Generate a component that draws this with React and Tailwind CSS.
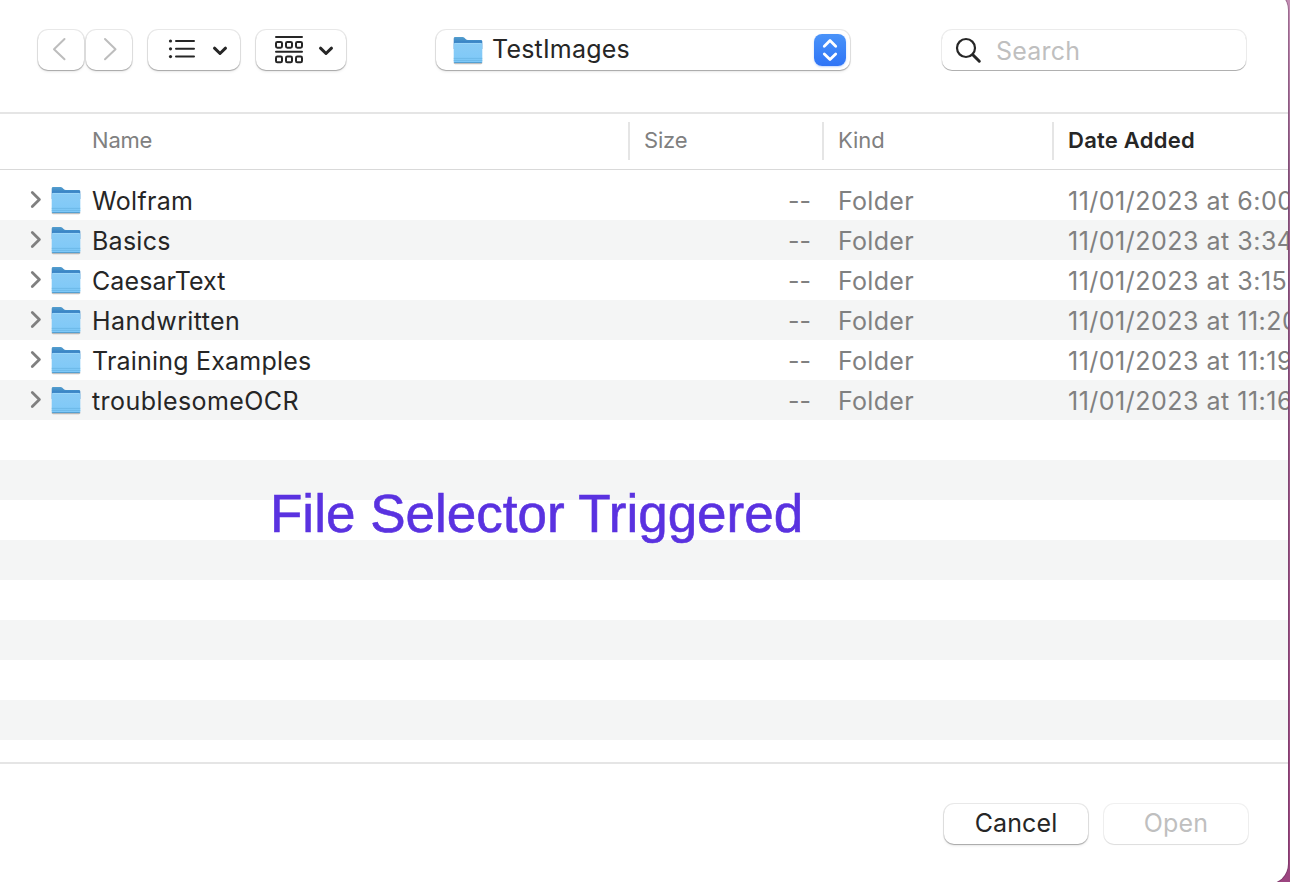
import React from "react";

const rows = [
  { name: "Wolfram", tracking: "tracking-[0.33px]", date: "11/01/2023 at 6:00 PM" },
  { name: "Basics", tracking: "tracking-[0.25px]", date: "11/01/2023 at 3:34 PM" },
  { name: "CaesarText", tracking: "tracking-[0.1px]", date: "11/01/2023 at 3:15 PM" },
  { name: "Handwritten", tracking: "tracking-[0.4px]", date: "11/01/2023 at 11:20 AM" },
  { name: "Training Examples", tracking: "tracking-[0.2px]", date: "11/01/2023 at 11:19 AM" },
  { name: "troublesomeOCR", tracking: "tracking-[0.43px]", date: "11/01/2023 at 11:16 AM" },
];
const emptyRows = [0, 1, 2, 3, 4, 5, 6, 7];

const buttonShadow =
  "shadow-[0_0_0_1px_rgba(0,0,0,0.09),0_1px_1px_rgba(0,0,0,0.22),0_2px_3px_rgba(0,0,0,0.08)]";

function Folder() {
  return (
    <svg width="32" height="30" viewBox="0 0 32 30" className="shrink-0">
      <defs>
        <linearGradient id="folderFront" x1="0" y1="0" x2="0" y2="1">
          <stop offset="0" stopColor="#8accf6" />
          <stop offset="1" stopColor="#7dc8f8" />
        </linearGradient>
        <linearGradient id="folderBack" x1="0" y1="0" x2="0" y2="1">
          <stop offset="0" stopColor="#559fce" />
          <stop offset="0.5" stopColor="#347fc4" />
          <stop offset="1" stopColor="#347fc4" />
        </linearGradient>
      </defs>
      <rect x="1.6" y="26.4" width="28.8" height="2.8" rx="1.4" fill="#000" opacity="0.25" />
      <path d="M1.7 3.4Q1.7 2 3.1 2H10.6Q11.6 2 12.4 2.8L13.6 4Q14.6 5 15.8 5H28.9Q30.3 5 30.3 6.4V14H1.7Z" fill="url(#folderBack)" />
      <path d="M1.7 9.4Q1.7 8 3.1 8H28.9Q30.3 8 30.3 9.4V26.4Q30.3 28 28.9 28H3.1Q1.7 28 1.7 26.4Z" fill="url(#folderFront)" />
      <path d="M2.6 8.4H29.4" stroke="#a2daf9" strokeWidth="0.8" />
      <path d="M1.7 23.4H30.3M1.7 25.4H30.3" stroke="#66b3e2" strokeWidth="0.7" />
      <path d="M2.2 27.5H29.8" stroke="#4f9bcd" strokeWidth="0.9" />
    </svg>
  );
}

function ChevronDown() {
  return (
    <svg width="16" height="12" viewBox="0 0 16 12" fill="none" stroke="#262626" strokeWidth="3" strokeLinecap="round" strokeLinejoin="round">
      <path d="M2.5 3.2L8 8.5L13.5 3.2" />
    </svg>
  );
}

function Toolbar() {
  return (
    <div className="flex h-[112px] shrink-0 items-start pl-[38px] pt-[30px]">
      <button className={`flex h-10 w-[46px] items-center justify-center rounded-[10px] bg-white ${buttonShadow}`}>
        <svg width="46" height="40" viewBox="0 0 46 40" fill="none" stroke="#bdbdbd" strokeWidth="2" strokeLinecap="round" strokeLinejoin="round">
          <path d="M26.5 9L16 19.2L26.5 29.3" />
        </svg>
      </button>
      <button className={`ml-[2px] flex h-10 w-[46px] items-center justify-center rounded-[10px] bg-white ${buttonShadow}`}>
        <svg width="46" height="40" viewBox="0 0 46 40" fill="none" stroke="#bdbdbd" strokeWidth="2" strokeLinecap="round" strokeLinejoin="round">
          <path d="M19 9L29.5 19.2L19 29.3" />
        </svg>
      </button>
      <button className={`ml-4 flex h-10 w-[92px] items-center rounded-[10px] bg-white pl-5 ${buttonShadow}`}>
        <svg width="28" height="40" viewBox="0 0 28 40" fill="none" stroke="#262626" strokeWidth="2" strokeLinecap="round">
          <path d="M8 11H26M8 18.8H26M8 26.6H26" />
          <g fill="#262626" stroke="none">
            <circle cx="2.5" cy="11" r="1.6" />
            <circle cx="2.5" cy="18.8" r="1.6" />
            <circle cx="2.5" cy="26.6" r="1.6" />
          </g>
        </svg>
        <span className="ml-4 mt-[1px]"><ChevronDown /></span>
      </button>
      <button className={`ml-4 flex h-10 w-[90px] items-center rounded-[10px] bg-white pl-[18px] ${buttonShadow}`}>
        <svg width="30" height="40" viewBox="0 0 30 40" fill="none" stroke="#262626" strokeWidth="2" strokeLinecap="round">
          <path d="M2 7H28M2 21.7H28" />
          <rect x="2" y="11.9" width="6" height="5.8" rx="1.4" />
          <rect x="12" y="11.9" width="6" height="5.8" rx="1.4" />
          <rect x="22" y="11.9" width="6" height="5.8" rx="1.4" />
          <rect x="2" y="26.5" width="6" height="5.8" rx="1.4" />
          <rect x="12" y="26.5" width="6" height="5.8" rx="1.4" />
          <rect x="22" y="26.5" width="6" height="5.8" rx="1.4" />
        </svg>
        <span className="ml-[14px] mt-[1px]"><ChevronDown /></span>
      </button>
      <button className={`ml-[90px] flex h-10 w-[414px] items-center rounded-[10px] bg-white pl-4 pr-1 ${buttonShadow}`}>
        <span><Folder /></span>
        <span className="-mt-[2px] ml-2 text-[25px] leading-10 tracking-[0.2px] text-[#262626]">TestImages</span>
        <span className="ml-auto flex h-8 w-8 items-center justify-center rounded-[8px] bg-gradient-to-b from-[#4a93f9] to-[#2f74f6] shadow-[0_1px_2px_rgba(47,116,246,0.3)]">
          <svg width="32" height="32" viewBox="0 0 32 32" fill="none" stroke="#fff" strokeWidth="2.8" strokeLinecap="round" strokeLinejoin="round">
            <path d="M10.3 12.2L16 6.6L21.7 12.2M10.3 20L16 25.6L21.7 20" />
          </svg>
        </span>
      </button>
      <label className="ml-[92px] flex h-10 w-[304px] items-center rounded-[10px] bg-white pl-[13px] shadow-[0_0_0_1px_rgba(0,0,0,0.08),0_1px_0.5px_rgba(0,0,0,0.25)]">
        <svg width="28" height="28" viewBox="0 0 28 28" fill="none" stroke="#262626" strokeLinecap="round">
          <circle cx="11" cy="12" r="9" strokeWidth="2.2" />
          <path d="M17.8 18.8L24.3 25.2" strokeWidth="3" />
        </svg>
        <span className="ml-[13px] mt-[2px] text-[25px] leading-10 tracking-[0.2px] text-[#bfbfbf]">Search</span>
      </label>
    </div>
  );
}

export default function App() {
  return (
    <div className="h-[882px] w-[1290px] overflow-hidden bg-gradient-to-b from-[#c48db4] via-[#98608c] via-[20%] to-[#9c4580] font-['Inter','Liberation_Sans',sans-serif]">
      <div className="-mt-[10px] flex h-[894px] w-[1288px] flex-col overflow-hidden whitespace-nowrap rounded-[20px] rounded-l-none bg-white pt-[10px] shadow-[0_0_0_1px_rgba(70,35,65,0.3)]">
        <Toolbar />
        <div className="flex h-[58px] shrink-0 items-start border-b border-t-2 border-b-[#d9d9d9] border-t-[#e5e5e5] text-[22px] leading-[36px] text-[#808080]">
          <div className="mt-2 h-[38px] w-[628px] pl-[92px] tracking-[-0.2px]">Name</div>
          <div className="mt-2 h-[38px] w-[194px] border-l-2 border-[#e5e5e5] pl-[14px] tracking-[-0.2px]">Size</div>
          <div className="mt-2 h-[38px] w-[230px] border-l-2 border-[#e5e5e5] pl-[14px] tracking-[-0.1px]">Kind</div>
          <div className="mt-2 h-[38px] flex-1 border-l-2 border-[#e5e5e5] pl-[14px] font-semibold tracking-[0.25px] text-[#262626]">Date Added</div>
        </div>
        <div className="h-[592px] shrink-0 pt-[10px]">
          {rows.map((row) => (
            <div key={row.name} className="flex h-10 items-center overflow-hidden text-[25px] leading-10 text-[#808080] even:bg-[#f4f5f5]">
              <div className="flex w-[628px] shrink-0 items-center pl-7">
                <svg width="16" height="22" viewBox="0 0 16 22" fill="none" stroke="#808080" strokeWidth="2.8" strokeLinecap="round" strokeLinejoin="round">
                  <path d="M4.3 3.6L11.4 10.5L4.3 17.4" />
                </svg>
                <span className="ml-[6px]"><Folder /></span>
                <span className={`ml-[10px] mt-[2px] text-[#262626] ${row.tracking}`}>{row.name}</span>
              </div>
              <div className="mt-[2px] w-[183px] shrink-0 text-right">--</div>
              <div className="mt-[2px] w-[257px] shrink-0 pl-[27px] tracking-[0.3px]">Folder</div>
              <div className="mt-[2px] flex-1 tracking-[0.5px]">{row.date}</div>
            </div>
          ))}
          {emptyRows.map((i) => (
            <div key={i} className="h-10 even:bg-[#f4f5f5]" />
          ))}
        </div>
        <div className="flex flex-1 items-start justify-end gap-4 border-t-2 border-[#e5e5e5] pr-10 pt-10 text-[25px]">
          <button className={`h-10 w-[144px] rounded-[10px] bg-white pb-[2px] leading-[38px] tracking-[0.1px] text-[#262626] ${buttonShadow}`}>Cancel</button>
          <button className="h-10 w-[144px] rounded-[10px] bg-white pb-[2px] leading-[38px] tracking-[0.2px] text-[#bfbfbf] shadow-[0_0_0_1px_rgba(0,0,0,0.06),0_1px_1px_rgba(0,0,0,0.08)]">Open</button>
        </div>
      </div>
      <div className="absolute left-[270px] top-[483px] whitespace-nowrap font-['Liberation_Sans',sans-serif] text-[53px] leading-[62px] text-[#5a32e0] [-webkit-text-stroke:0.6px_#5a32e0]">File Selector Triggered</div>
    </div>
  );
}
